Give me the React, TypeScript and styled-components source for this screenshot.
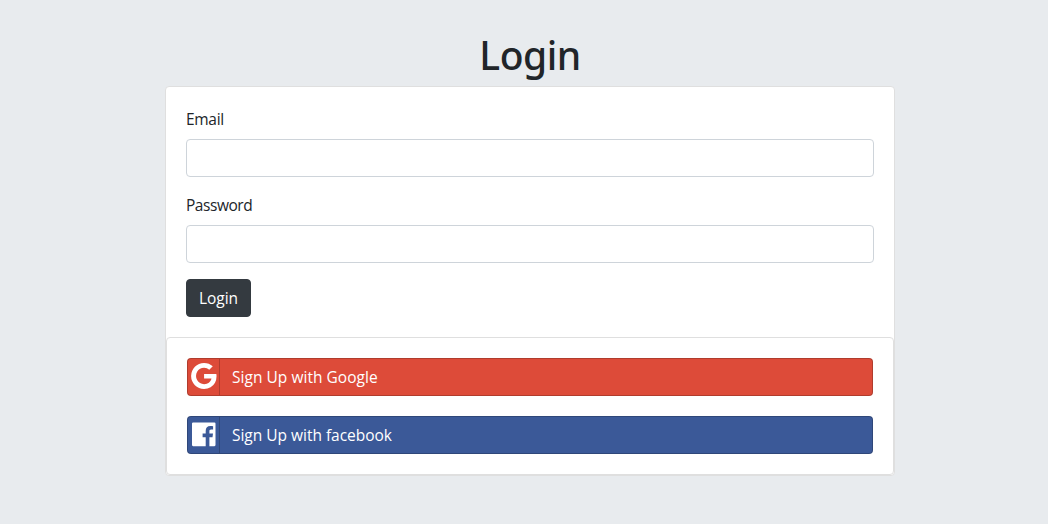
import React from "react";
import styled, { createGlobalStyle } from "styled-components";

const GlobalStyle = createGlobalStyle`
  *, *::before, *::after { box-sizing: border-box; }
  body {
    margin: 0;
    background: #e8ebee;
    color: #212529;
    font: 400 16px/24px "Open Sans", "Noto Sans", sans-serif;
  }
`;

const Page = styled.main`
  min-height: 524px;
  width: 730px;
  margin-left: 165px;
  padding-top: 31px;
`;

const Title = styled.h1`
  margin: 0 0 7px;
  font-family: "Noto Sans", "Open Sans", sans-serif;
  font-size: 39px;
  line-height: 48px;
  font-weight: 500;
  text-align: center;
  letter-spacing: -0.5px;
`;

const Card = styled.section`
  background: #fff;
  border: 1px solid #dfdfdf;
  border-radius: 4px;
`;

const LoginForm = styled.form`
  padding: 20px;
`;

const Field = styled.div`
  margin-bottom: 16px;
`;

const Label = styled.label<{ $spacing: string }>`
  display: block;
  width: max-content;
  margin-bottom: 8px;
  font-size: 15.5px;
  letter-spacing: ${(p) => p.$spacing};
`;

const Input = styled.input`
  display: block;
  width: 100%;
  height: 38px;
  padding: 6px 12px;
  border: 1px solid #ced4da;
  border-radius: 4px;
  background: #fff;
  font: inherit;
`;

const LoginButton = styled.button`
  display: block;
  width: 65px;
  height: 38px;
  padding: 0;
  border: 1px solid #343a40;
  border-radius: 4px;
  background: #343a40;
  color: #fff;
  font: inherit;
  font-size: 15.5px;
  letter-spacing: 0;
`;

const SocialCard = styled(Card)`
  display: flex;
  flex-direction: column;
  gap: 20px;
  padding: 20px;
`;

const SocialButton = styled.a<{ $color: string; $spacing: string }>`
  display: flex;
  height: 38px;
  border: 1px solid rgba(0, 0, 0, 0.2);
  border-radius: 4px;
  background: ${(p) => p.$color};
  color: #fff;
  font-size: 15.5px;
  line-height: 36px;
  letter-spacing: ${(p) => p.$spacing};
`;

const IconSlot = styled.span`
  flex: none;
  width: 32px;
  margin-right: 12px;
  border-right: 1px solid rgba(0, 0, 0, 0.2);
  svg { display: block; }
`;

const GoogleIcon = () => (
  <svg width="31" height="36" viewBox="0 0 31 36" fill="#fff">
    <path
      transform="translate(3.1 2.4) scale(0.0169)"
      d="M768 750h725q12 67 12 128 0 217-91 387.5t-259.5 266.5-386.5 96q-157 0-299-60.5t-245-163.5-163.5-245-60.5-299 60.5-299 163.5-245 245-163.5 299-60.5q300 0 515 201l-209 201q-123-119-306-119-129 0-238.5 65t-173.5 176.5-64 243.5 64 243.5 173.5 176.5 238.5 65q87 0 160-24t120-60 82-82 51.5-87 22.5-78h-436v-264z"
    />
  </svg>
);

const FacebookIcon = () => (
  <svg width="31" height="36" viewBox="0 0 31 36" fill="#fff">
    <path d="M5.1 5.5H26.4Q27.5 5.5 27.5 6.6V28.1Q27.5 29.2 26.4 29.2H21.4V20.2H24.5L25 16.6H21.4V14.3C21.4 13.2 21.7 12.5 23.2 12.5H25.1V9.3C24.4 9.2 23.4 9.1 22.3 9.1C19.4 9.1 17.7 10.8 17.7 13.9V16.6H14.6V20.2H17.7V29.2H5.1Q4 29.2 4 28.1V6.6Q4 5.5 5.1 5.5Z" />
  </svg>
);

export default function App() {
  return (
    <>
      <GlobalStyle />
      <Page>
        <Title>Login</Title>
        <Card>
          <LoginForm>
            <Field>
              <Label htmlFor="email" $spacing="-0.3px">Email</Label>
              <Input id="email" type="email" />
            </Field>
            <Field>
              <Label htmlFor="password" $spacing="-0.45px">Password</Label>
              <Input id="password" type="password" />
            </Field>
            <LoginButton type="button">Login</LoginButton>
          </LoginForm>
          <SocialCard>
            <SocialButton $color="#dd4b39" $spacing="0.03px">
              <IconSlot><GoogleIcon /></IconSlot>
              Sign Up with Google
            </SocialButton>
            <SocialButton $color="#3b5998" $spacing="-0.02px">
              <IconSlot><FacebookIcon /></IconSlot>
              Sign Up with facebook
            </SocialButton>
          </SocialCard>
        </Card>
      </Page>
    </>
  );
}
